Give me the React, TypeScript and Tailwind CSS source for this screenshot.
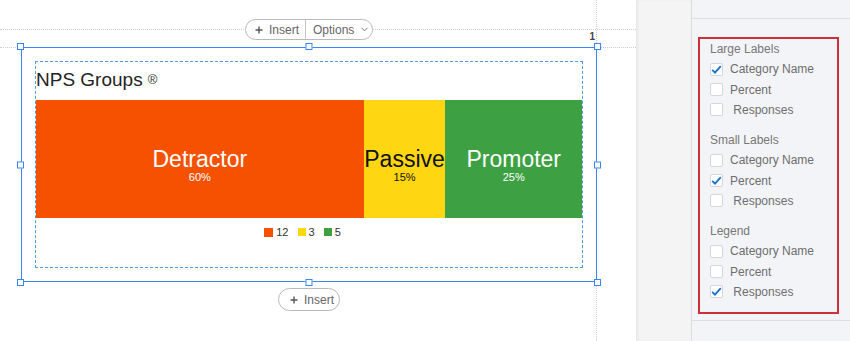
import React from "react";

const FONT = { fontFamily: '"Liberation Sans", Arial, Helvetica, sans-serif' };

function Plus() {
  return (
    <svg width="8" height="8" viewBox="0 0 8 8" className="shrink-0">
      <path d="M4 0.5v7M0.5 4h7" stroke="#555" strokeWidth="1.4" />
    </svg>
  );
}

function Check() {
  return (
    <svg width="11" height="9" viewBox="0 0 11 9">
      <path d="M1.2 4.8l2.8 2.8 5.8-6.4" fill="none" stroke="#1b74c9" strokeWidth="1.9" />
    </svg>
  );
}

function Option({ label, checked, pad }: { label: string; checked?: boolean; pad?: boolean }) {
  return (
    <div className="flex h-[20.25px] items-center">
      <span className="flex h-[13px] w-[13px] items-center justify-center rounded-[2px] border border-[#d6d6d8] bg-white">
        {checked && <Check />}
      </span>
      <span className="ml-[7px] text-[12px] text-[#6e6e6e]">
        {pad ? "\u00a0" : ""}
        {label}
      </span>
    </div>
  );
}

function Group({ title, checked }: { title: string; checked: number }) {
  return (
    <div className="flex flex-col">
      <div className="flex h-[20.25px] items-center text-[12px] text-[#777]">{title}</div>
      <Option label="Category Name" checked={checked === 0} />
      <Option label="Percent" checked={checked === 1} />
      <Option label="Responses" checked={checked === 2} pad />
    </div>
  );
}

function Segment({ name, pct, className, dark }: { name: string; pct: string; className: string; dark?: boolean }) {
  return (
    <div className={`flex flex-col items-center justify-center overflow-hidden pt-[12px] ${className}`}>
      <span className={`whitespace-nowrap text-[23px] leading-[23px] ${dark ? "text-[#111]" : "text-white"}`}>{name}</span>
      <span className={`text-[11px] leading-[12px] ${dark ? "text-[#111]" : "text-white"}`}>{pct}</span>
    </div>
  );
}

export default function App() {
  return (
    <div className="flex h-[341px] w-[850px] overflow-hidden bg-white" style={FONT}>
      {/* canvas */}
      <div className="relative h-full w-[636px] bg-white">
        {/* guides */}
        <div className="absolute left-0 right-0 top-[29px] border-t border-dotted border-[#cfcfcf]" />
        <div className="absolute left-0 right-0 top-[47px] border-t border-dotted border-[#cfcfcf]" />
        <div className="absolute bottom-0 left-[596px] top-0 border-l border-dotted border-[#cfcfcf]" />

        <div className="relative flex w-[597px] flex-col items-center pl-[21px]">
          {/* toolbar pill */}
          <div className="mt-[19px] flex h-[21px] w-[128px] items-center rounded-full border border-[#b9b9b9] bg-white text-[12px] text-[#666]">
            <div className="flex h-full w-[59px] items-center gap-[6px] pl-[9px]">
              <Plus />
              <span>Insert</span>
            </div>
            <div className="h-full w-px bg-[#c4c4c4]" />
            <div className="flex h-full flex-1 items-center gap-[7px] pl-[7px]">
              <span>Options</span>
              <svg width="7" height="5" viewBox="0 0 7 5">
                <path d="M0.5 0.8l3 3 3-3" fill="none" stroke="#777" strokeWidth="1" />
              </svg>
            </div>
          </div>

          {/* selection */}
          <div className="relative mt-[7px] h-[235px] w-[576px] border border-[#3a86f6] bg-white p-[13px]">
            <span className="absolute -top-[16px] right-[1px] text-[10px] font-bold leading-none text-[#444]">1</span>
            <span className="absolute -left-[5px] -top-[5px] h-[7px] w-[7px] border border-[#3a86f6] bg-white" />
            <span className="absolute left-1/2 -top-[5px] h-[7px] w-[7px] -translate-x-1/2 border border-[#3a86f6] bg-white" />
            <span className="absolute -right-[5px] -top-[5px] h-[7px] w-[7px] border border-[#3a86f6] bg-white" />
            <span className="absolute -left-[5px] top-1/2 h-[7px] w-[7px] -translate-y-1/2 border border-[#3a86f6] bg-white" />
            <span className="absolute -right-[5px] top-1/2 h-[7px] w-[7px] -translate-y-1/2 border border-[#3a86f6] bg-white" />
            <span className="absolute -bottom-[5px] -left-[5px] h-[7px] w-[7px] border border-[#3a86f6] bg-white" />
            <span className="absolute -bottom-[5px] left-1/2 h-[7px] w-[7px] -translate-x-1/2 border border-[#3a86f6] bg-white" />
            <span className="absolute -bottom-[5px] -right-[5px] h-[7px] w-[7px] border border-[#3a86f6] bg-white" />

            <div className="flex h-full flex-col border border-dashed border-[#4f9ae0]">
              <div className="mb-[2px] flex h-[36px] items-center">
                <span className="text-[19px] text-[#222]">NPS Groups</span>
                <span className="ml-[5px] text-[13px] text-[#333]">®</span>
              </div>
              <div className="flex h-[118px]">
                <Segment name="Detractor" pct="60%" className="w-[60%] bg-[#f65100]" />
                <Segment name="Passive" pct="15%" className="w-[15%] bg-[#fed712]" dark />
                <Segment name="Promoter" pct="25%" className="w-[25%] bg-[#3da143]" />
              </div>
              <div className="mt-[7px] flex h-[14px] items-center justify-center gap-[9px] pr-[13px] text-[11px] text-[#333]">
                <div className="flex items-center gap-[3px]">
                  <span className="h-[9px] w-[9px] bg-[#f65100]" />
                  <span>12</span>
                </div>
                <div className="flex items-center gap-[3px]">
                  <span className="h-[8px] w-[8px] bg-[#fed712]" />
                  <span>3</span>
                </div>
                <div className="flex items-center gap-[3px]">
                  <span className="h-[8px] w-[8px] bg-[#3da143]" />
                  <span>5</span>
                </div>
              </div>
            </div>
          </div>

          {/* bottom insert */}
          <div className="mt-[6px] flex h-[23px] w-[62px] items-center gap-[6px] rounded-full border border-[#b9b9b9] bg-white pl-[11px] text-[12px] text-[#666]">
            <Plus />
            <span>Insert</span>
          </div>
        </div>
      </div>

      {/* gutter */}
      <div className="h-full w-[55px] bg-[#f4f4f5] shadow-[inset_2px_0_3px_rgba(0,0,0,0.05)]" />

      {/* settings panel */}
      <div className="flex h-full flex-1 flex-col border-l border-[#dcdcdf] bg-[#f3f4f8]">
        <div className="h-[19px] border-b border-[#dedfe3]" />
        <div className="ml-[6px] mt-[18px] flex h-[277px] w-[141px] flex-col gap-[10px] border-2 border-[#cd3038] pl-[10px]">
          <Group title="Large Labels" checked={0} />
          <Group title="Small Labels" checked={1} />
          <Group title="Legend" checked={2} />
        </div>
        <div className="mt-[6px] border-t border-[#dedfe3]" />
      </div>
    </div>
  );
}
